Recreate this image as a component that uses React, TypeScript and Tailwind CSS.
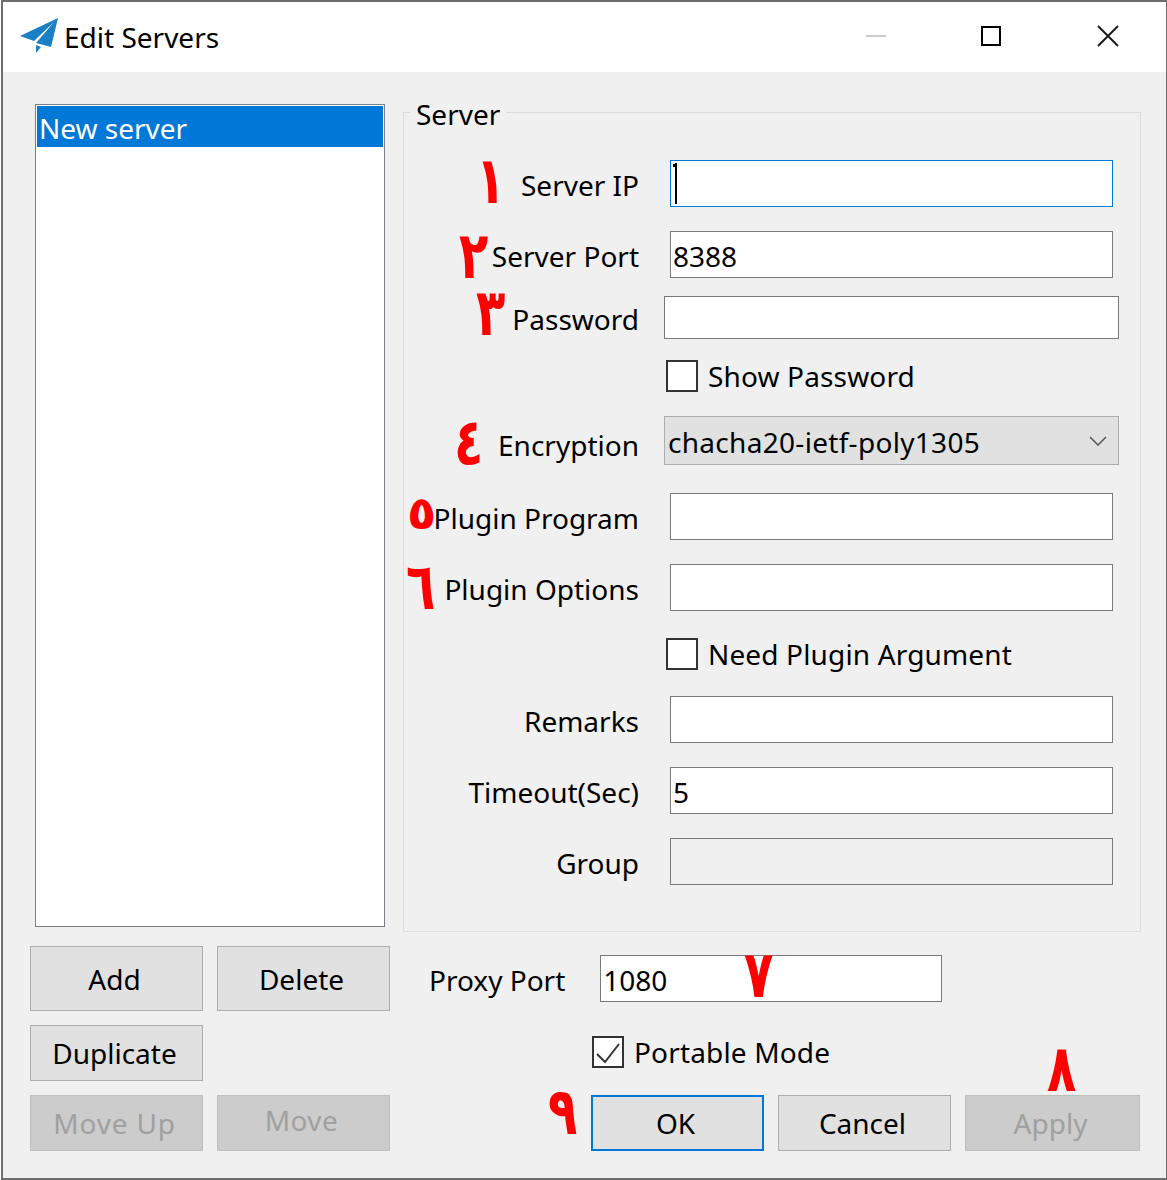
import React from 'react';

const font = "font-['Noto_Sans','Open_Sans',sans-serif]";

// Red hand-added step numbers sitting on top of the dialog
const Step = ({ n, className }: { n: string; className: string }) => (
  <span className={`absolute origin-top font-['DejaVu_Sans',sans-serif] text-[48px] font-bold leading-none text-[#ff0000] ${className}`}>{n}</span>
);

const Field = ({ label, value, className, disabled, focused }: { label: string; value?: string; className: string; disabled?: boolean; focused?: boolean }) => (
  <div className={`flex h-[47px] ${className}`}>
    <div className="h-[47px] w-[235px] shrink-0 pt-[5px] text-right leading-[40px] text-black">{label}</div>
    <div className={`relative ml-[31px] h-[47px] w-[443px] border px-[2px] leading-[49px] ${focused ? 'border-[#0078d7]' : 'border-[#7a7a7a]'} ${disabled ? 'bg-[#efefef]' : 'bg-white'}`}>
      {value}
      {focused && (
        <>
          <div className="absolute left-[4px] top-[2px] h-[41px] w-[2px] bg-black" />
          <div className="absolute left-[2px] top-[3px] h-[3px] w-[2px] bg-black" />
        </>
      )}
    </div>
  </div>
);

const Check = ({ label, checked, className }: { label: string; checked?: boolean; className: string }) => (
  <div className={`flex h-[32px] items-center gap-[10px] ${className}`}>
    <div className="h-[32px] w-[32px] shrink-0 border-2 border-[#333333] bg-white">
      {checked && (
        <svg width="28" height="28" viewBox="0 0 28 28" fill="none" stroke="#333333" strokeWidth="2">
          <path d="M3 16l8 8L25 6" />
        </svg>
      )}
    </div>
    <span className="tracking-[0.15px]">{label}</span>
  </div>
);

const Btn = ({ label, className, disabled }: { label: string; className: string; disabled?: boolean }) => (
  <button className={`flex items-center justify-center border pr-[4px] ${disabled ? 'border-[#bfbfbf] bg-[#cccccc] text-[#a0a0a0]' : 'border-[#adadad] bg-[#e1e1e1] text-black'} ${className}`}>
    {label}
  </button>
);

export default function App() {
  return (
    <div className={`relative h-[1180px] w-[1167px] bg-white pl-[1px] text-[28px] text-black ${font}`}>
      <div className="flex h-full flex-col border-2 border-r border-[#6d6d6d] bg-[#f0f0f0]">
        {/* Title bar */}
        <div className="flex h-[70px] shrink-0 items-center bg-white pl-[17px]">
          <svg width="40" height="38" viewBox="0 0 40 38" className="mb-[1px]">
            <path d="M38 0L0 18l14 5L34 4 16 25l15 4z" fill="#1b7fc4" />
            <path d="M16 27l0 8 5-6z" fill="#1b7fc4" />
          </svg>
          <span className="ml-[4px]">Edit Servers</span>
          <div className="mb-[2px] ml-auto flex items-center">
            <div className="h-[2px] w-[20px] bg-[#cccccc]" />
            <div className="ml-[95px] h-[20px] w-[20px] border-2 border-black" />
            <svg width="22" height="22" viewBox="0 0 22 22" className="ml-[96px] mr-[47px]" stroke="#1a1a1a" strokeWidth="2">
              <path d="M1 1l20 20M21 1L1 21" />
            </svg>
          </div>
        </div>

        {/* Body */}
        <div className="flex flex-1 pl-[27px]">
          {/* Left column */}
          <div className="w-[360px] shrink-0 pt-[32px]">
            <div className="ml-[5px] h-[823px] w-[350px] border border-[#7a7f85] bg-white p-[1px]">
              <div className="h-[41px] bg-[#0078d7] pl-[2px] leading-[44px] text-white">New server</div>
            </div>
            <div className="mt-[19px] grid grid-cols-[173px_173px] grid-rows-[65px_56px_56px] gap-x-[14px] gap-y-[14px]">
              <Btn label="Add" className="" />
              <Btn label="Delete" className="" />
              <Btn label="Duplicate" className="col-start-1" />
              <Btn label="Move Up" className="col-start-1 row-start-3 tracking-[0.8px]" disabled />
              <Btn label="Move" className="col-start-2 row-start-3 pb-[6px] tracking-[0.4px]" disabled />
            </div>
          </div>

          {/* Right column */}
          <div className="ml-[13px] w-[738px] shrink-0 pt-[40px]">
            <div className="relative h-[820px] border border-[#dcdcdc]">
              <span className="absolute left-[6px] top-[-19px] bg-[#f0f0f0] px-[6px] leading-[40px]">Server</span>

              <Field label="Server IP" className="mt-[47px]" focused />
              <Field label="Server Port" value="8388" className="mt-[24px]" />

              <div className="mt-[18px] flex h-[43px]">
                <div className="w-[235px] shrink-0 pt-[3px] text-right leading-[40px]">Password</div>
                <div className="ml-[25px] h-[43px] w-[455px] border border-[#7a7a7a] bg-white" />
              </div>
              <Check label="Show Password" className="ml-[262px] mt-[21px]" />

              <div className="mt-[24px] flex h-[49px]">
                <div className="w-[235px] shrink-0 pt-[9px] text-right leading-[40px]">Encryption</div>
                <div className="relative ml-[25px] flex h-[49px] w-[455px] items-center border border-[#adadad] bg-[#e1e1e1] pl-[3px] pt-[3px] tracking-[0.3px]">
                  chacha20-ietf-poly1305
                  <svg width="18" height="10" viewBox="0 0 18 10" fill="none" stroke="#555555" strokeWidth="1.5" className="absolute right-[11px] top-[19px]">
                    <path d="M1 1l8 8 8-8" />
                  </svg>
                </div>
              </div>

              <Field label="Plugin Program" className="mt-[28px]" />
              <Field label="Plugin Options" className="mt-[24px]" />
              <Check label="Need Plugin Argument" className="ml-[262px] mt-[27px]" />
              <Field label="Remarks" className="mt-[26px]" />
              <Field label="Timeout(Sec)" value="5" className="mt-[24px]" />
              <Field label="Group" className="mt-[24px]" disabled />
            </div>

            <div className="mt-[23px] flex h-[47px]">
              <div className="ml-[26px] pt-[5px] leading-[40px]">Proxy Port</div>
              <div className="ml-[35px] h-[47px] w-[342px] border border-[#7a7a7a] bg-white pl-[2px] leading-[48px]">1080</div>
            </div>
            <Check label="Portable Mode" className="ml-[189px] mt-[34px]" checked />
            <div className="ml-[188px] mt-[27px] flex gap-[14px]">
              <Btn label="OK" className="h-[56px] w-[173px] border-2 !border-[#0078d7]" />
              <Btn label="Cancel" className="h-[56px] w-[173px]" />
              <Btn label="Apply" className="h-[56px] w-[175px]" disabled />
            </div>
          </div>
        </div>
      </div>

      <Step n="١" className="left-[476px] top-[147px] scale-y-[1.36]" />
      <Step n="٢" className="left-[459px] top-[222px] scale-y-[1.36]" />
      <Step n="٣" className="left-[476px] top-[279px] scale-y-[1.36]" />
      <Step n="٤" className="left-[454px] top-[409px] scale-y-[1.36]" />
      <Step n="٥" className="left-[407px] top-[490px] scale-y-[0.95]" />
      <Step n="٦" className="left-[406px] top-[553px] scale-y-[1.36]" />
      <Step n="٧" className="left-[744px] top-[941px] scale-y-[1.36]" />
      <Step n="٨" className="left-[1047px] top-[1035px] scale-y-[1.36]" />
      <Step n="٩" className="left-[548px] top-[1078px] scale-y-[1.36]" />
    </div>
  );
}
